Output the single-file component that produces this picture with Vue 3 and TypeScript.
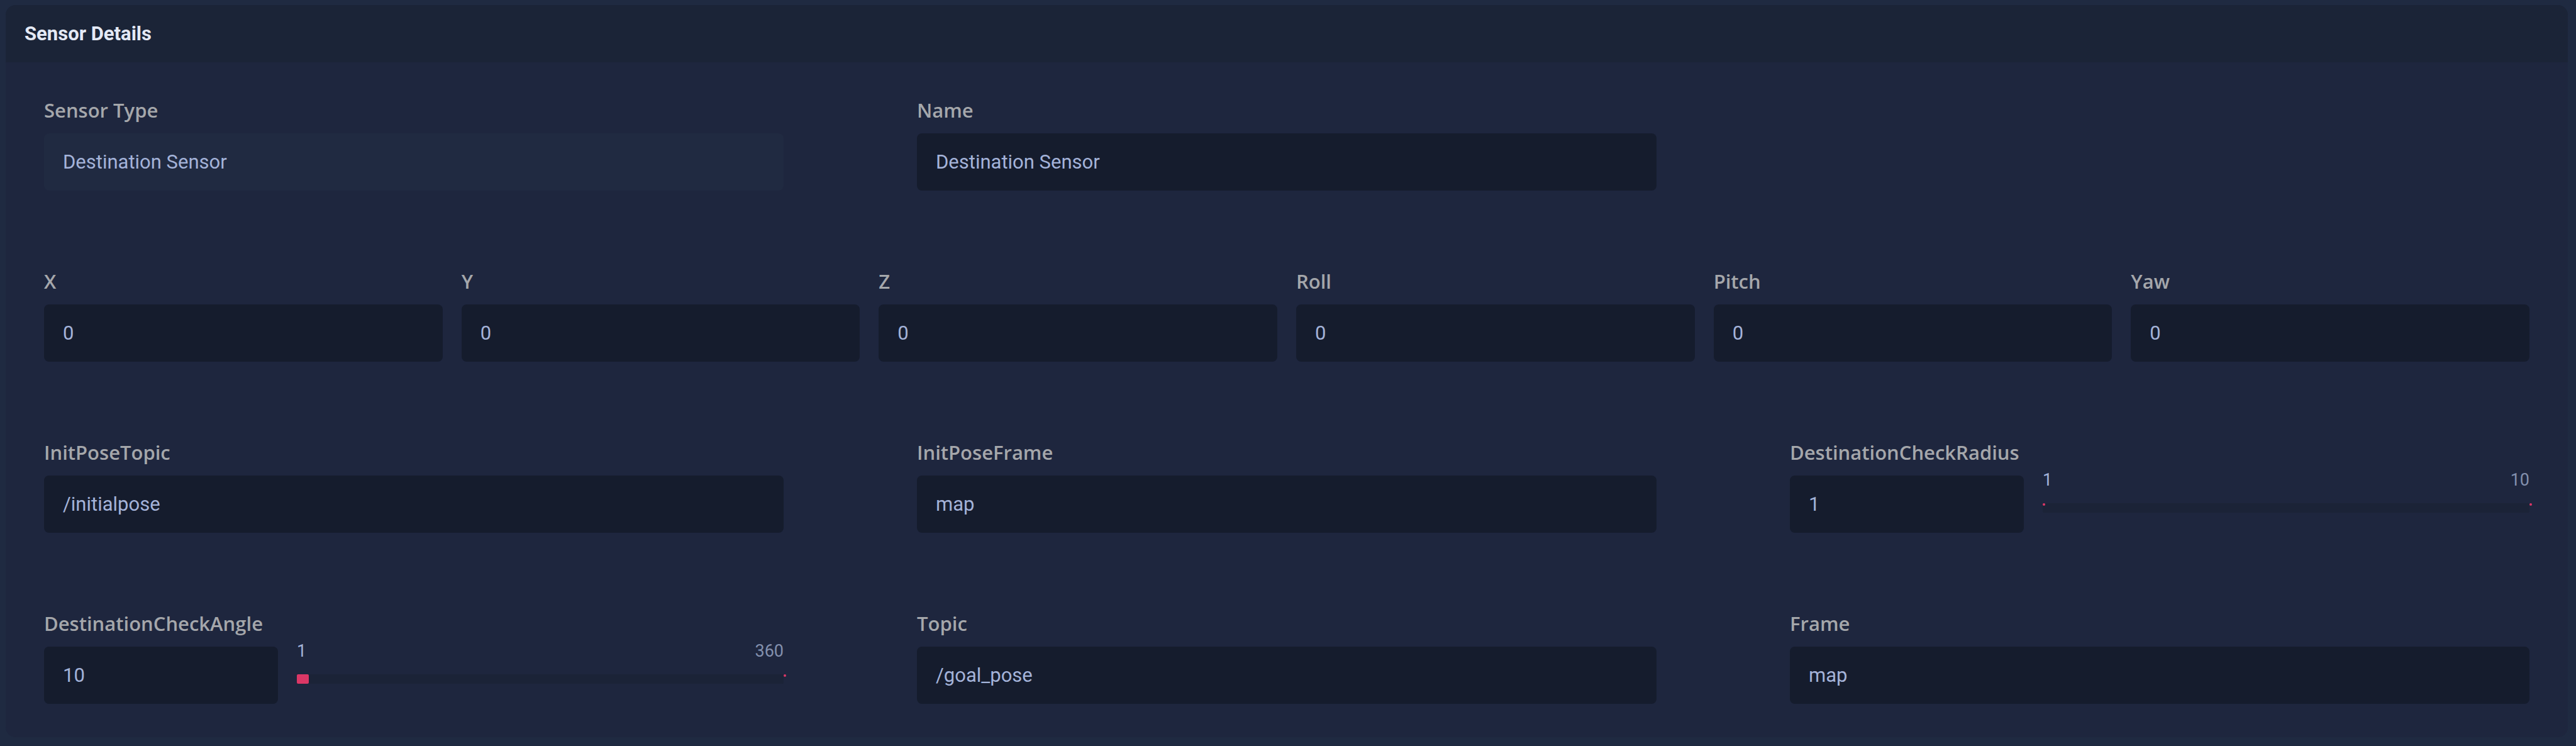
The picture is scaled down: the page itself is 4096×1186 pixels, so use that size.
<script setup lang="ts">
import { reactive } from 'vue'

interface Field {
  id: string
  label: string
  value: string | number
  numeric?: boolean
  disabled?: boolean
  min?: number
  max?: number
}

interface Row {
  layout: 'thirds' | 'sixths'
  fields: Field[]
}

const axis = (id: string, label: string): Field => ({ id, label, value: 0, numeric: true })

const rows = reactive<Row[]>([
  {
    layout: 'thirds',
    fields: [
      { id: 'sensor-type', label: 'Sensor Type', value: 'Destination Sensor', disabled: true },
      { id: 'name', label: 'Name', value: 'Destination Sensor' },
    ],
  },
  {
    layout: 'sixths',
    fields: [
      axis('x', 'X'),
      axis('y', 'Y'),
      axis('z', 'Z'),
      axis('roll', 'Roll'),
      axis('pitch', 'Pitch'),
      axis('yaw', 'Yaw'),
    ],
  },
  {
    layout: 'thirds',
    fields: [
      { id: 'init-pose-topic', label: 'InitPoseTopic', value: '/initialpose' },
      { id: 'init-pose-frame', label: 'InitPoseFrame', value: 'map' },
      { id: 'check-radius', label: 'DestinationCheckRadius', value: 1, numeric: true, min: 1, max: 10 },
    ],
  },
  {
    layout: 'thirds',
    fields: [
      { id: 'check-angle', label: 'DestinationCheckAngle', value: 10, numeric: true, min: 1, max: 360 },
      { id: 'topic', label: 'Topic', value: '/goal_pose' },
      { id: 'frame', label: 'Frame', value: 'map' },
    ],
  },
])

function percent(field: Field): number {
  const min = field.min ?? 0
  const max = field.max ?? 100
  return ((Number(field.value) - min) / (max - min)) * 100
}
</script>

<template>
  <main class="page">
    <section class="panel">
      <header class="panel-header">
        <h1 class="title">Sensor Details</h1>
      </header>
      <form class="panel-body" @submit.prevent>
        <div v-for="(row, i) in rows" :key="i" class="row" :class="row.layout">
          <div v-for="field in row.fields" :key="field.id" class="field">
            <label class="label" :for="field.id">{{ field.label }}</label>
            <div v-if="field.max !== undefined" class="ranged">
              <input :id="field.id" v-model.number="field.value" class="input" type="number" :min="field.min" :max="field.max" />
              <div class="slider">
                <div class="limits">
                  <span class="limit-min">{{ field.min }}</span>
                  <span class="limit-max">{{ field.max }}</span>
                </div>
                <div class="track">
                  <span v-if="percent(field) > 0" class="fill" :style="{ width: percent(field) + '%' }"></span>
                  <span v-else class="dot dot-start"></span>
                  <span class="dot dot-end"></span>
                  <input
                    v-model.number="field.value"
                    class="range"
                    type="range"
                    :min="field.min"
                    :max="field.max"
                    :aria-label="field.label"
                  />
                </div>
              </div>
            </div>
            <input
              v-else
              :id="field.id"
              v-model="field.value"
              class="input"
              :type="field.numeric ? 'number' : 'text'"
              :disabled="field.disabled"
            />
          </div>
        </div>
      </form>
    </section>
  </main>
</template>

<style>
body {
  margin: 0;
  background: #1e263e;
}
</style>

<style scoped>
.page {
  box-sizing: border-box;
  padding: 8px 13px 13px 9px;
  background: #1f2a41;
  font-family: Roboto, "Liberation Sans", sans-serif;
}

.panel {
  background: #1e263e;
  border-radius: 16px;
  overflow: hidden;
}

.panel-header {
  display: flex;
  align-items: center;
  height: 91px;
  padding: 0 30px;
  background: #1b2437;
}

.title {
  margin: 0;
  color: #e4e9f5;
  font-size: 31px;
  font-weight: 700;
  line-height: 40px;
}

.panel-body {
  display: flex;
  flex-direction: column;
  gap: 124px;
  padding: 56px 61px 53px;
}

.row {
  display: grid;
}

.thirds {
  grid-template-columns: repeat(3, minmax(0, 1fr));
  column-gap: 212px;
}

.sixths {
  grid-template-columns: repeat(6, minmax(0, 1fr));
  column-gap: 30px;
}

.field {
  display: flex;
  flex-direction: column;
  gap: 16px;
}

.label {
  color: #a5a7ab;
  font-family: "Open Sans", "Noto Sans", sans-serif;
  font-size: 31px;
  font-weight: 600;
  line-height: 41px;
}

.input {
  box-sizing: border-box;
  width: 100%;
  min-width: 0;
  height: 91px;
  margin: 0;
  padding: 0 30px;
  border: 0;
  border-radius: 8px;
  outline: 0;
  background: #151c2d;
  color: #a4b3d9;
  font-family: inherit;
  font-size: 31px;
  line-height: 40px;
  appearance: textfield;
}

.input::-webkit-inner-spin-button,
.input::-webkit-outer-spin-button {
  margin: 0;
  appearance: none;
}

.input:disabled {
  background: #202a41;
}

.ranged {
  display: grid;
  grid-template-columns: repeat(3, minmax(0, 1fr));
  column-gap: 30px;
}

.slider {
  display: flex;
  flex-direction: column;
  grid-column: span 2;
  gap: 22px;
  margin-top: -8px;
}

.limits {
  display: flex;
  justify-content: space-between;
  font-size: 27px;
  line-height: 30px;
}

.limit-min {
  color: #a4b3d9;
}

.limit-max {
  color: #8390ad;
}

.track {
  position: relative;
  height: 15px;
  border-radius: 2px;
  background: #1b2337;
}

.fill {
  position: absolute;
  inset: 0 auto 0 0;
  border-radius: 2px;
  background: #db3766;
}

.dot {
  position: absolute;
  top: 0;
  width: 4px;
  height: 4px;
  border-radius: 50%;
  background: #db3766;
}

.dot-start {
  left: 0;
}

.dot-end {
  left: 100%;
}

.range {
  position: absolute;
  inset: 0;
  width: 100%;
  height: 100%;
  margin: 0;
  background: transparent;
  appearance: none;
  cursor: pointer;
}

.range::-webkit-slider-thumb {
  width: 1px;
  height: 15px;
  background: transparent;
  appearance: none;
}
</style>
